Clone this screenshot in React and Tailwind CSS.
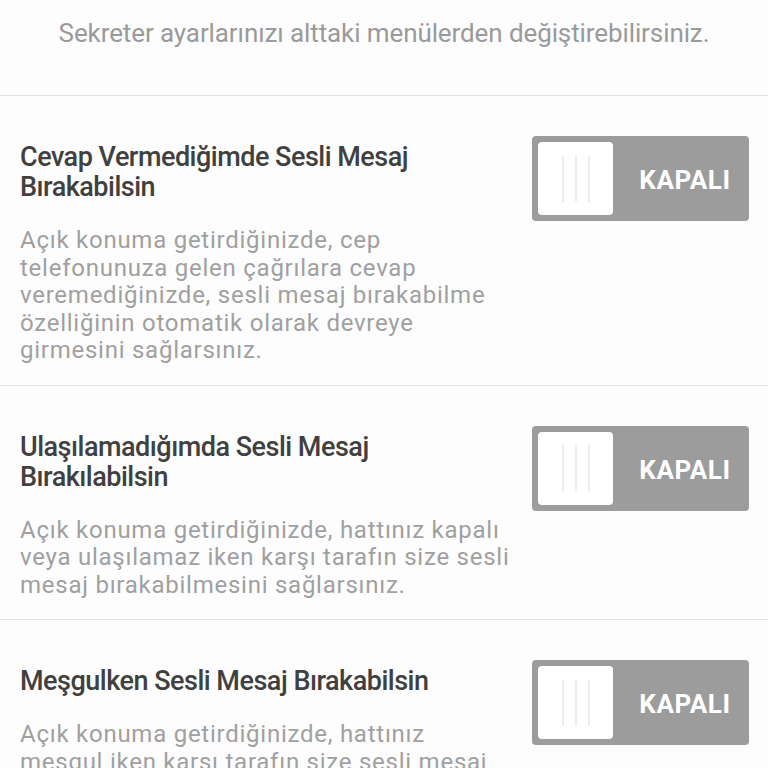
const items = [
  {
    title: 'Cevap Vermediğimde Sesli Mesaj Bırakabilsin',
    desc: 'Açık konuma getirdiğinizde, cep telefonunuza gelen çağrılara cevap veremediğinizde, sesli mesaj bırakabilme özelliğinin otomatik olarak devreye girmesini sağlarsınız.',
  },
  {
    title: 'Ulaşılamadığımda Sesli Mesaj Bırakılabilsin',
    desc: 'Açık konuma getirdiğinizde, hattınız kapalı veya ulaşılamaz iken karşı tarafın size sesli mesaj bırakabilmesini sağlarsınız.',
  },
  {
    title: 'Meşgulken Sesli Mesaj Bırakabilsin',
    desc: 'Açık konuma getirdiğinizde, hattınız meşgul iken karşı tarafın size sesli mesaj bırakabilmesini sağlarsınız.',
  },
];

function Toggle() {
  return (
    <div className="flex h-[85px] w-[217px] shrink-0 items-center rounded-[4px] bg-[#9c9c9c] p-[6px]">
      <div className="flex h-[73px] w-[75px] items-center justify-center gap-[11px] rounded-[4px] bg-white">
        <span className="h-[46px] w-[2px] bg-[#ececec]" />
        <span className="h-[46px] w-[2px] bg-[#ececec]" />
        <span className="h-[46px] w-[2px] bg-[#ececec]" />
      </div>
      <div className="flex-1 pl-[14px] pt-[3px] text-center text-[26px] font-bold leading-none tracking-[0.6px] text-white">KAPALI</div>
    </div>
  );
}

export default function App() {
  return (
    <div className="h-[768px] w-[768px] overflow-hidden bg-[#fdfdfd] font-['Roboto',sans-serif]">
      <div className="flex h-[96px] items-start justify-center border-b border-[#e3e3e3] pt-[19px]">
        <p className="text-[26px] leading-[28px] tracking-[-0.1px] text-[#9a9a9a]">
          Sekreter ayarlarınızı alttaki menülerden değiştirebilirsiniz.
        </p>
      </div>
      {items.map(item => (
        <div key={item.title} className="flex gap-[20px] border-b border-[#e3e3e3] pb-[20px] pl-[20px] pr-[19px] pt-[40px]">
          <div className="w-[493px] pt-[6px]">
            <h2 className="text-[27px] font-medium leading-[30px] tracking-[-0.5px] text-[#404040]">{item.title}</h2>
            <p className="mt-[25px] text-[24px] leading-[27.5px] tracking-[0.75px] text-[#a0a0a0]">{item.desc}</p>
          </div>
          <Toggle />
        </div>
      ))}
    </div>
  );
}
